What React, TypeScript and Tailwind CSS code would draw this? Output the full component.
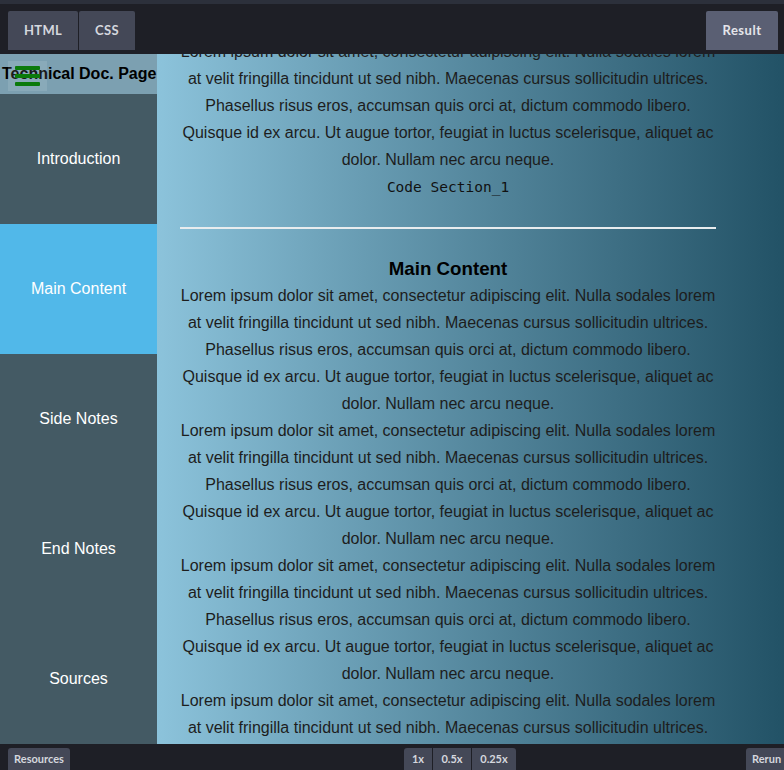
import React from "react";

const para = [
  "Lorem ipsum dolor sit amet, consectetur adipiscing elit. Nulla sodales lorem",
  "at velit fringilla tincidunt ut sed nibh. Maecenas cursus sollicitudin ultrices.",
  "Phasellus risus eros, accumsan quis orci at, dictum commodo libero.",
  "Quisque id ex arcu. Ut augue tortor, feugiat in luctus scelerisque, aliquet ac",
  "dolor. Nullam nec arcu neque.",
];

function Para() {
  return (
    <p>
      {para.map((l, i) => (
        <React.Fragment key={i}>
          {l}
          {i < para.length - 1 && <br />}
        </React.Fragment>
      ))}
    </p>
  );
}

const nav = ["Introduction", "Main Content", "Side Notes", "End Notes", "Sources"];

export default function App() {
  return (
    <div className="w-[784px] h-[770px] overflow-hidden flex flex-col bg-[#1e1f26]" style={{ fontFamily: "Lato, 'Open Sans', sans-serif" }}>
      {/* top strip */}
      <div className="h-[4px] bg-[#2c303b] shrink-0" />
      {/* top bar */}
      <div className="h-[50px] shrink-0 flex items-end justify-between px-[8px] pb-[4px] bg-[#1e1f26]">
        <div className="flex gap-[1px]">
          <div className="w-[70px] h-[39px] flex items-center justify-center bg-[#444857] rounded-t-[2px] text-[13px] font-bold text-[#d5d7de] tracking-[0.3px]">HTML</div>
          <div className="w-[56px] h-[39px] flex items-center justify-center bg-[#444857] rounded-t-[2px] text-[13px] font-bold text-[#d5d7de] tracking-[0.3px]">CSS</div>
        </div>
        <div className="w-[72px] h-[39px] mr-[-2px] flex items-center justify-center bg-[#5a5f73] rounded-t-[2px] text-[13px] font-bold text-[#e4e5ea] tracking-[0.5px]">Result</div>
      </div>
      {/* page */}
      <div className="h-[690px] shrink-0 flex overflow-hidden" style={{ fontFamily: "'Liberation Sans', Arial, sans-serif" }}>
        <nav className="w-[157px] shrink-0 flex flex-col bg-[#445a64]">
          <div className="relative h-[40px] shrink-0 flex items-center pl-[2px] bg-[#7ca0b1]">
            <span className="text-[16px] font-bold text-black whitespace-nowrap">Technical Doc. Page</span>
            <div className="absolute left-[8px] top-[7px] w-[39px] h-[30px] bg-white/10 flex flex-col items-center pt-[5px] gap-[4px]">
              <div className="w-[25px] h-[4px] bg-[#0b7a0b] rounded-[1px]" />
              <div className="w-[25px] h-[4px] bg-[#0b7a0b] rounded-[1px]" />
              <div className="w-[25px] h-[4px] bg-[#0b7a0b] rounded-[1px]" />
            </div>
          </div>
          {nav.map((n) => (
            <div
              key={n}
              className={
                "h-[130px] shrink-0 flex items-center justify-center text-[16px] text-white " +
                (n === "Main Content" ? "bg-[#51b8e9]" : "bg-[#445a64]")
              }
            >
              {n}
            </div>
          ))}
        </nav>
        <main className="flex-1 overflow-hidden bg-gradient-to-r from-[#8cc3db] to-[#225266]">
          <div className="mt-[-16.5px] ml-[23px] w-[536px] text-center text-[16px] leading-[27px] text-[#1d1d1d]">
            <Para />
            <div className="text-[14.5px] text-[#111] pt-[1px]" style={{ fontFamily: "'DejaVu Sans Mono', monospace" }}>Code Section_1</div>
            <div className="mt-[26px] mb-[26px] h-[2px] bg-[#e8ecee]" />
            <h2 className="text-[18.72px] font-bold text-black leading-[27px]">Main Content</h2>
            <Para />
            <Para />
            <Para />
            <Para />
          </div>
        </main>
      </div>
      {/* bottom bar */}
      <div className="h-[26px] shrink-0 flex items-end pl-[8px] bg-[#1e1f26]" style={{ fontFamily: "Lato, 'Open Sans', sans-serif" }}>
        <div className="w-[62px] h-[22px] flex items-center justify-center bg-[#444857] rounded-t-[3px] text-[11px] font-bold text-[#d5d7de]">Resources</div>
        <div className="flex gap-[1px] ml-[334px]">
          <div className="w-[28px] h-[22px] flex items-center justify-center bg-[#444857] rounded-tl-[3px] text-[11px] font-bold text-[#d5d7de]">1x</div>
          <div className="w-[38px] h-[22px] flex items-center justify-center bg-[#444857] text-[11px] font-bold text-[#d5d7de]">0.5x</div>
          <div className="w-[44px] h-[22px] flex items-center justify-center bg-[#444857] rounded-tr-[3px] text-[11px] font-bold text-[#d5d7de]">0.25x</div>
        </div>
        <div className="ml-auto w-[38px] h-[22px] pl-[6px] flex items-center bg-[#444857] rounded-tl-[3px] text-[11px] font-bold text-[#d5d7de]">Rerun</div>
      </div>
    </div>
  );
}
